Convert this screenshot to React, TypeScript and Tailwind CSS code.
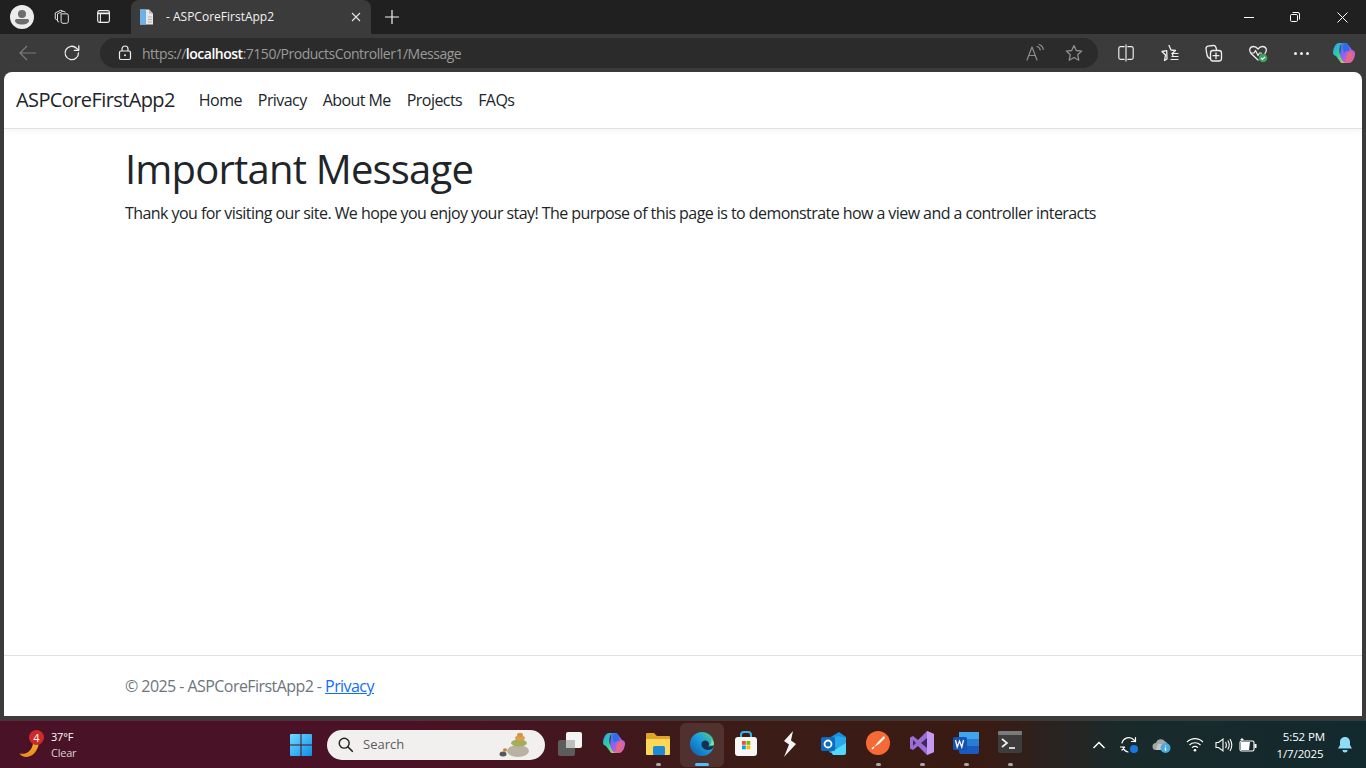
import React from 'react';

const stroke = { fill: 'none', stroke: 'currentColor', strokeWidth: 1.2, strokeLinecap: 'round', strokeLinejoin: 'round' } as const;

function Svg({ size = 20, className, children }: { size?: number; className?: string; children: React.ReactNode }) {
  return (
    <svg width={size} height={size} viewBox="0 0 20 20" className={className}>
      {children}
    </svg>
  );
}

function CopilotIcon({ size, id }: { size: number; id: string }) {
  return (
    <svg width={size} height={size} viewBox="0 0 24 24">
      <defs>
        <linearGradient id={id + 'a'} x1="0" y1="0" x2="1" y2="1">
          <stop offset="0" stopColor="#2f9bf0" />
          <stop offset="0.5" stopColor="#2dd4a0" />
          <stop offset="1" stopColor="#f7d23e" />
        </linearGradient>
        <linearGradient id={id + 'b'} x1="0" y1="0" x2="1" y2="1">
          <stop offset="0" stopColor="#2a7ff0" />
          <stop offset="0.5" stopColor="#a45df0" />
          <stop offset="1" stopColor="#f56a8c" />
        </linearGradient>
      </defs>
      <path d="M9 2h5c1 0 1.6.6 1.9 1.5L20 9c2 .5 3 1.500 3 3.500 0 3-1.500 7-3.500 8.500-.7.5-1.500 1-2.500 1h-5c-1 0-1.700-.6-2-1.600L8 15z" fill={`url(#${id}b)`} />
      <path d="M15 22h-5c-1 0-1.600-.6-1.900-1.500L4 15c-2-.5-3-1.500-3-3.500 0-3 1.500-7 3.500-8.500C5.200 2.500 6 2 7 2h3c-1.500 1-2 3-2.500 5.500C7 11 8 15 10 19c.8 1.800 2.500 3 5 3z" fill={`url(#${id}a)`} />
      <path d="M14 2c1 0 1.600.6 1.900 1.500L18 10c-2-.5-5 0-6 2l-1-4c-.5-2 .8-6 3-6z" fill="#1f6fe8" opacity="0.85" />
      <path d="M13 22c2.500 0 5-2 6-4.500.8-2 1.500-4 .8-7-1.500-.5-3.500 0-4.800 1.500l-1 6c-.2 1.500-.5 3-1 4z" fill="#f46a6a" opacity="0.8" />
    </svg>
  );
}

function TabStrip() {
  return (
    <div className="h-[34px] bg-[#202020] flex items-stretch text-white">
      <div className="w-[44px] flex items-center justify-center">
        <svg width="24" height="24" viewBox="0 0 24 24">
          <circle cx="12" cy="12" r="12" fill="#ececec" />
          <circle cx="12" cy="9" r="4" fill="#6d6d6d" />
          <path d="M5 15.500c0-1 1-1.500 2-1.500h10c1 0 2 .5 2 1.500 0 2.500-3 4-7 4s-7-1.500-7-4z" fill="#6d6d6d" />
        </svg>
      </div>
      <div className="w-[36px] flex items-center justify-center">
        <Svg size={18} className="text-[#e4e4e4]">
          <g {...stroke} strokeWidth={1.1}>
            <path d="M9 6.500h6.500a1.500 1.500 0 0 1 1.500 1.500v7a2 2 0 0 1-2 2h-4a2 2 0 0 1-2-2V8z" />
            <path d="M6.500 15.500l-1.500-.8V6.500L11 3.500l2.500 1" />
            <path d="M4 13L2.500 12V5.500L8.500 2.500l2 .8" />
          </g>
        </Svg>
      </div>
      <div className="w-[48px] flex items-center justify-center">
        <Svg size={18} className="text-[#f0f0f0]">
          <rect x="3" y="3" width="13" height="13" rx="2" {...stroke} strokeWidth={1.3} />
          <path d="M3.500 6h12" {...stroke} strokeWidth={2} />
          <path d="M6 6v9.500" {...stroke} strokeWidth={1.2} />
        </Svg>
      </div>
      <div className="ml-[3px] w-[240px] mt-0 bg-[#3b3b3b] rounded-t-lg flex items-center pl-[6px] pr-[8px]">
        <svg width="18" height="18" viewBox="0 0 18 18" className="ml-[1px]">
          <path d="M2 1.500h9l4 4v11H2z" fill="#e8e8e8" />
          <rect x="2" y="1.500" width="6" height="15" fill="#6fb1e6" />
          <path d="M11 1.500v4h4z" fill="#b9b9b9" />
          <path d="M10 9h4M10 11.500h4M10 14h4" stroke="#b0b0b0" strokeWidth="1" />
        </svg>
        <span className="ml-[10px] text-[12px] text-[#f2f2f2] flex-1">- ASPCoreFirstApp2</span>
        <svg width="10" height="10" viewBox="0 0 10 10" className="mr-[2px] text-[#e6e6e6]">
          <path d="M1 1l8 8M9 1l-8 8" stroke="currentColor" strokeWidth="1.1" />
        </svg>
      </div>
      <div className="w-[42px] flex items-center justify-center">
        <svg width="14" height="14" viewBox="0 0 14 14">
          <path d="M7 0v14M0 7h14" stroke="#f2f2f2" strokeWidth="1.2" />
        </svg>
      </div>
      <div className="flex-1" />
      <div className="flex items-stretch">
        <div className="w-[46px] flex items-center justify-center">
          <div className="w-[10px] h-px bg-white" />
        </div>
        <div className="w-[46px] flex items-center justify-center">
          <svg width="10" height="10" viewBox="0 0 10 10">
            <rect x="0.500" y="2.500" width="7" height="7" rx="1.200" fill="none" stroke="#fff" strokeWidth="1" />
            <path d="M2.500 .5h5.500a1.500 1.500 0 0 1 1.500 1.500v5.500" fill="none" stroke="#fff" strokeWidth="1" />
          </svg>
        </div>
        <div className="w-[48px] flex items-center justify-center">
          <svg width="11" height="11" viewBox="0 0 11 11">
            <path d="M.5 .5l10 10M10.500 .5l-10 10" stroke="#fff" strokeWidth="1" />
          </svg>
        </div>
      </div>
    </div>
  );
}

function Toolbar() {
  return (
    <div className="h-[38px] bg-[#3b3b3b] flex items-center text-[#efefef]">
      <div className="w-[56px] flex items-center justify-center">
        <svg width="18" height="16" viewBox="0 0 18 16">
          <path d="M1 8h16M8 1L1 8l7 7" fill="none" stroke="#7d7d7d" strokeWidth="1.200" />
        </svg>
      </div>
      <div className="w-[32px] flex items-center justify-center">
        <Svg size={20}>
          <path d="M16.500 10a6.700 6.700 0 1 1-2-4.800l2 1.900" {...stroke} strokeWidth={1.300} />
          <path d="M16.800 2.800v4.500h-4.500" {...stroke} strokeWidth={1.300} />
        </Svg>
      </div>
      <div className="ml-[12px] w-[998px] h-[30px] rounded-full bg-[#2b2b2b] flex items-center pl-[18px] pr-[14px]">
        <svg width="14" height="16" viewBox="0 0 14 16">
          <rect x="1.500" y="6" width="11" height="8.500" rx="1.500" fill="none" stroke="#efefef" strokeWidth="1.200" />
          <path d="M4 6V4a3 3 0 0 1 6 0v2" fill="none" stroke="#efefef" strokeWidth="1.200" />
          <circle cx="7" cy="10.200" r="1" fill="#efefef" />
        </svg>
        <span className="ml-[10px] text-[14px] text-[#9a9a9a] flex-1 font-['Open_Sans',sans-serif] tracking-[-0.035em]">
          https://<span className="text-white font-semibold">localhost</span>:7150/ProductsController1/Message
        </span>
        <div className="flex items-center gap-[19px] text-[#8e8e8e]">
          <Svg size={20}>
            <path d="M2 17L7 4l5 13M3.800 12.500h6.400" {...stroke} />
            <path d="M12 3.500c2 .5 3 2 3.200 3.500M14 1.500c2.500 .8 4 3 4.200 5" {...stroke} />
          </Svg>
          <Svg size={20}>
            <path d="M10 2.500l2.300 5 5.400.6-4 3.700 1.100 5.400L10 14.500l-4.800 2.700 1.100-5.400-4-3.700 5.400-.6z" {...stroke} strokeWidth={1.300} />
          </Svg>
        </div>
      </div>
      <div className="w-[55px] flex items-center justify-center">
        <Svg size={18}>
          <path d="M8 3H4a2 2 0 0 0-2 2v10a2 2 0 0 0 2 2h4M12 3h4a2 2 0 0 1 2 2v10a2 2 0 0 1-2 2h-4M10 1v18" {...stroke} strokeWidth={1.300} />
        </Svg>
      </div>
      <div className="w-[34px] flex items-center justify-center">
        <Svg size={20}>
          <path d="M9 2.500l2 4.500 4.500.5-3.300 3 .7 2M7 16l-2.500 1.500 1-5.500-3.500-3.500 4.700-.8z" {...stroke} strokeWidth={1.300} />
          <path d="M12 10.500h6M12 13.500h6M11 16.500h7" {...stroke} />
        </Svg>
      </div>
      <div className="w-[54px] flex items-center justify-center">
        <Svg size={20}>
          <path d="M6.500 15.500c-2-.3-3-1.500-3.500-3.500L2 6c-.2-1.500.5-2.500 2-2.800l5-.7c1.500-.2 2.500.5 3 2l.5 2" {...stroke} strokeWidth={1.300} />
          <rect x="6.500" y="7.500" width="11" height="10.500" rx="2.500" {...stroke} strokeWidth={1.300} />
          <path d="M12 10v5.500M9.200 12.700h5.600" {...stroke} strokeWidth={1.300} />
        </Svg>
      </div>
      <div className="w-[34px] flex items-center justify-center">
        <svg width="20" height="20" viewBox="0 0 20 20">
          <path d="M10 17L3 10.500C.5 8 1.500 3.500 5.500 3.500c2 0 3.500 1.200 4.500 2.500 1-1.300 2.500-2.500 4.500-2.500 4 0 5 4.500 2.500 7" {...stroke} strokeWidth={1.300} />
          <path d="M3 10h3l1.500-2.500 2.500 5 1.500-2.500h2" {...stroke} />
          <circle cx="15" cy="15" r="4.300" fill="#3ba55c" />
          <path d="M13 15l1.500 1.500L17 13.800" fill="none" stroke="#fff" strokeWidth="1.200" />
        </svg>
      </div>
      <div className="w-[52px] flex items-center justify-center gap-[3px]">
        <div className="w-[3px] h-[3px] rounded-full bg-[#efefef]" />
        <div className="w-[3px] h-[3px] rounded-full bg-[#efefef]" />
        <div className="w-[3px] h-[3px] rounded-full bg-[#efefef]" />
      </div>
      <div className="w-[34px] flex items-center justify-center">
        <CopilotIcon size={24} id="cp1" />
      </div>
    </div>
  );
}

function Page() {
  return (
    <div className="flex-1 mx-[4px] bg-white rounded-t-lg flex flex-col text-[#212529] font-['Open_Sans',sans-serif]">
      <nav className="h-[57px] border-b border-[#dee2e6] shadow-[0_2px_6px_rgba(0,0,0,0.05)] flex items-center pl-[12px]">
        <span className="text-[20px] tracking-[-0.03em] text-[#212529]">ASPCoreFirstApp2</span>
        <div className="ml-[16px] flex items-center text-[16px] tracking-[-0.035em]">
          <span className="px-[8px]">Home</span>
          <span className="px-[8px]">Privacy</span>
          <span className="px-[8px]">About Me</span>
          <span className="px-[8px]">Projects</span>
          <span className="px-[8px]">FAQs</span>
        </div>
      </nav>
      <main className="flex-1 w-[1140px] mx-auto px-3 pt-[16px]">
        <h1 className="text-[40px] leading-[48px] font-medium tracking-[-0.02em] mb-[8px]">Important Message</h1>
        <p className="text-[16px] leading-[24px] tracking-[-0.035em]">
          Thank you for visiting our site. We hope you enjoy your stay! The purpose of this page is to demonstrate how a view and a controller interacts
        </p>
      </main>
      <footer className="h-[61px] border-t border-[#dee2e6]">
        <div className="w-[1140px] mx-auto px-3 pt-[18px] text-[16px] leading-[24px] text-[#6c757d] tracking-[-0.035em]">
          © 2025 - ASPCoreFirstApp2 - <span className="text-[#0d6efd] underline">Privacy</span>
        </div>
      </footer>
    </div>
  );
}

function Slot({ children, mark, active }: { children: React.ReactNode; mark?: boolean; active?: boolean }) {
  return (
    <div className={`w-[44px] h-[44px] flex flex-col items-center justify-between pt-[8px] pb-[1px] rounded-md ${active ? 'bg-white/10' : ''}`}>
      {children}
      <div className={active ? 'w-[14px] h-[3px] rounded-full bg-[#4cc2ff]' : mark ? 'w-[5px] h-[3px] rounded-full bg-[#a8a8a8]' : 'h-[3px]'} />
    </div>
  );
}

function Taskbar() {
  return (
    <div className="h-[48px] mt-[4px] bg-[linear-gradient(90deg,#4a1226_0%,#4a1226_30%,#3b1c16_55%,#3a1b14_72%,#1a2a2b_82%,#12292d_100%)] border-t border-white/10 flex items-center text-white font-['Open_Sans',sans-serif]">
      <div className="w-[279px] flex items-center pl-[19px]">
        <div className="w-[32px] h-[40px] relative flex items-center">
          <svg width="22" height="22" viewBox="0 0 22 22" className="mt-[6px]">
            <defs>
              <linearGradient id="moon" x1="0" y1="0" x2="0" y2="1">
                <stop offset="0" stopColor="#f5b52e" />
                <stop offset="1" stopColor="#ef8a1d" />
              </linearGradient>
            </defs>
            <path d="M20 1c1 9-4 18-12 19-3 .3-6-1-7.500-3.500C6 18 13 15 14 6c2-.5 4-2.500 6-5z" fill="url(#moon)" />
          </svg>
          <span className="absolute left-[10px] top-[5px] w-[15px] h-[15px] rounded-full bg-[#cf2a27] text-[11px] leading-[15px] text-center">4</span>
        </div>
        <div className="text-[11px] leading-[16px] tracking-[-0.02em]">
          <div>37°F</div>
          <div className="text-[#d9d0d2]">Clear</div>
        </div>
      </div>
      <div className="w-[44px] flex items-center justify-center">
        <svg width="22" height="22" viewBox="0 0 22 22">
          <defs>
            <linearGradient id="win" x1="0" y1="0" x2="1" y2="1">
              <stop offset="0" stopColor="#6fdcff" />
              <stop offset="1" stopColor="#0f8ee8" />
            </linearGradient>
          </defs>
          <path d="M0 1a1 1 0 0 1 1-1h9.500v10.500H0zM11.500 0H21a1 1 0 0 1 1 1v9.500H11.500zM0 11.500h10.500V22H1a1 1 0 0 1-1-1zM11.500 11.500H22V21a1 1 0 0 1-1 1h-9.500z" fill="url(#win)" />
        </svg>
      </div>
      <div className="ml-[4px] w-[218px] h-[30px] rounded-full bg-[#f2f0ef] flex items-center pl-[10px] pr-[12px] text-[#5c5c5c]">
        <Svg size={18} className="text-[#222]">
          <circle cx="8" cy="8" r="5.500" fill="none" stroke="currentColor" strokeWidth="1.600" />
          <path d="M12 12l5 5" stroke="currentColor" strokeWidth="1.800" strokeLinecap="round" />
        </Svg>
        <span className="ml-[8px] text-[13px] flex-1">Search</span>
        <svg width="34" height="26" viewBox="0 0 34 26">
          <ellipse cx="19" cy="19" rx="11" ry="6" fill="#b9b2a3" />
          <ellipse cx="20" cy="11" rx="8" ry="3.500" fill="#a6ad5a" />
          <ellipse cx="21" cy="6" rx="5" ry="2.500" fill="#d8a152" />
          <ellipse cx="21" cy="3" rx="3" ry="2.200" fill="#e09044" />
          <ellipse cx="4" cy="22" rx="3.500" ry="2.500" fill="#55565a" />
          <ellipse cx="6" cy="18" rx="2" ry="1.800" fill="#c58438" />
        </svg>
      </div>
      <div className="ml-[3px] flex items-center">
        <Slot>
          <svg width="26" height="26" viewBox="0 0 26 26">
            <rect x="1" y="9" width="17" height="16" rx="2" fill="#5c5c5c" />
            <rect x="9" y="1" width="16" height="16" rx="2" fill="#f4f4f4" />
            <rect x="9" y="9" width="9" height="8" fill="#bdbdbd" />
          </svg>
        </Slot>
        <Slot>
          <CopilotIcon size={24} id="cp2" />
        </Slot>
        <Slot mark>
          <svg width="26" height="26" viewBox="0 0 26 26">
            <path d="M1 3a1 1 0 0 1 1-1h7l3 3h12a1 1 0 0 1 1 1v3H1z" fill="#e0a526" />
            <path d="M1 8h24v15a1 1 0 0 1-1 1H2a1 1 0 0 1-1-1z" fill="#fcd758" />
            <rect x="8" y="15" width="12" height="9" rx="1.500" fill="#1b8bd6" />
          </svg>
        </Slot>
        <Slot active>
          <svg width="26" height="26" viewBox="0 0 26 26">
            <defs>
              <linearGradient id="edge" x1="0" y1="1" x2="1" y2="0">
                <stop offset="0" stopColor="#0c59a4" />
                <stop offset="0.550" stopColor="#1b9de2" />
                <stop offset="1" stopColor="#58d37b" />
              </linearGradient>
            </defs>
            <circle cx="13" cy="13" r="12" fill="url(#edge)" />
            <path d="M25 14c0 3-3 5-6 5-4 0-7-3-6.500-6.500.3-2 2-3 3.500-3 3 0 4 2 4 4 0 1-.5 1.500-1 2 3 0 6-1 6-1.500z" fill="#16324d" />
            <path d="M25 13.500c0-2-1-4-3-5.500 1 2 .5 5-1.500 6 2 .5 4 .5 4.500-.5z" fill="#8de08a" />
          </svg>
        </Slot>
        <Slot>
          <svg width="24" height="26" viewBox="0 0 24 26">
            <path d="M7 7V4a3 3 0 0 1 3-3h4a3 3 0 0 1 3 3v3" fill="none" stroke="#35b4e8" strokeWidth="2" />
            <rect x="1" y="6" width="22" height="19" rx="3" fill="#f7f7f7" />
            <rect x="8" y="10" width="3.800" height="3.800" fill="#f25022" />
            <rect x="12.500" y="10" width="3.800" height="3.800" fill="#7fba00" />
            <rect x="8" y="14.500" width="3.800" height="3.800" fill="#00a4ef" />
            <rect x="12.500" y="14.500" width="3.800" height="3.800" fill="#ffb900" />
          </svg>
        </Slot>
        <Slot>
          <svg width="18" height="26" viewBox="0 0 18 26">
            <path d="M12 0L3 10l5 3.500L3 26l12-13-5-3.500z" fill="#f4f4f4" />
          </svg>
        </Slot>
        <Slot>
          <svg width="26" height="26" viewBox="0 0 26 26">
            <path d="M8 7l10-6 7 5v14a2 2 0 0 1-2 2H10a2 2 0 0 1-2-2z" fill="#1490df" />
            <path d="M8 8l9-3 8 2v7l-8 3-9-4z" fill="#28a8ea" />
            <path d="M10 21l15-9v10a2 2 0 0 1-2 2H12z" fill="#50d9ff" />
            <rect x="0" y="6" width="14" height="14" rx="1.500" fill="#0f6cbd" />
            <circle cx="7" cy="13" r="3.500" fill="none" stroke="#fff" strokeWidth="1.800" />
          </svg>
        </Slot>
        <Slot mark>
          <svg width="24" height="24" viewBox="0 0 24 24">
            <circle cx="12" cy="12" r="12" fill="#f56a35" />
            <path d="M18 5l-6 6-4 5 5-3 6-6z" fill="#fff" />
            <path d="M8 16l-2 2" stroke="#fff" strokeWidth="1.500" />
          </svg>
        </Slot>
        <Slot mark>
          <svg width="24" height="24" viewBox="0 0 24 24">
            <path d="M17 0l7 3v18l-7 3-9-9-5 4-3-1.500v-11L3 5l5 4z" fill="#9a6ed6" />
            <path d="M17 0l7 3v18l-7 3z" fill="#c49bf0" />
            <path d="M17 7l-6 5 6 5z" fill="#3e2a5f" />
            <path d="M3 9v6l3-3z" fill="#3e2a5f" />
          </svg>
        </Slot>
        <Slot mark>
          <svg width="26" height="24" viewBox="0 0 26 24">
            <rect x="6" y="1" width="20" height="22" rx="2" fill="#185abd" />
            <rect x="6" y="1" width="20" height="7" fill="#41a5ee" />
            <rect x="6" y="8" width="20" height="7" fill="#2b7cd3" />
            <rect x="0" y="6" width="14" height="13" rx="1.500" fill="#1553b0" />
            <path d="M2.500 9l1.700 7 2.300-6 2.300 6 1.700-7" fill="none" stroke="#fff" strokeWidth="1.300" />
          </svg>
        </Slot>
        <Slot mark>
          <svg width="24" height="22" viewBox="0 0 24 22">
            <rect width="24" height="22" rx="2" fill="#3d3d3d" />
            <rect width="24" height="4" rx="1" fill="#7a7a7a" />
            <path d="M4 8l5 4-5 4" fill="none" stroke="#f0f0f0" strokeWidth="1.700" />
            <path d="M11 17h6" stroke="#f0f0f0" strokeWidth="1.700" />
          </svg>
        </Slot>
      </div>
      <div className="flex-1" />
      <div className="flex items-center text-white">
        <div className="w-[30px] flex justify-center">
          <svg width="14" height="8" viewBox="0 0 14 8">
            <path d="M1.500 7L7 1.500 12.500 7" fill="none" stroke="#fff" strokeWidth="1.500" />
          </svg>
        </div>
        <div className="w-[32px] flex justify-center">
          <svg width="20" height="20" viewBox="0 0 20 20">
            <path d="M2 8a7 7 0 0 1 12-3l1.500 1.500M15.500 2.500v4h-4" {...stroke} />
            <path d="M2 15l2.500-3h-4M3 12.500A7 7 0 0 0 8 17" {...stroke} />
            <circle cx="14" cy="14" r="4" fill="#1878e0" />
          </svg>
        </div>
        <div className="w-[31px] flex justify-center">
          <svg width="20" height="18" viewBox="0 0 20 18">
            <path d="M4 14a3.500 3.500 0 0 1 0-7 5 5 0 0 1 9-1.500 4 4 0 0 1 2 1.500" fill="#a5a8a9" />
            <path d="M4 14h8V8H6z" fill="#c5c8c8" />
            <circle cx="13.500" cy="12" r="5" fill="#48a9dc" />
            <path d="M13.500 9.500v.7M13.500 11.500V15" stroke="#fff" strokeWidth="1.300" />
          </svg>
        </div>
        <div className="w-[36px] flex justify-center">
          <svg width="18" height="15" viewBox="0 0 18 15">
            <path d="M1 5c4.500-4.500 11.500-4.500 16 0M3.500 8c3-3 8-3 11 0M6 10.700c1.800-1.600 4.200-1.600 6 0" fill="none" stroke="#fff" strokeWidth="1.100" />
            <circle cx="9" cy="13.300" r="1.300" fill="#fff" />
          </svg>
        </div>
        <div className="w-[22px] flex justify-center">
          <svg width="18" height="16" viewBox="0 0 18 16">
            <path d="M1 5.500h2.500L8 2v12l-4.500-3.500H1z" fill="none" stroke="#fff" strokeWidth="1.100" />
            <path d="M10.500 5c1 1.800 1 4.200 0 6M12.800 3.500c1.700 2.700 1.700 6.300 0 9M15 2c2.200 3.700 2.200 8.300 0 12" fill="none" stroke="#fff" strokeWidth="1.100" />
          </svg>
        </div>
        <div className="w-[26px] flex justify-center">
          <svg width="18" height="14" viewBox="0 0 18 14">
            <rect x="1" y="3" width="14" height="10" rx="1.500" fill="none" stroke="#fff" strokeWidth="1.100" />
            <path d="M2 4h9l-1 8H2z" fill="#fff" />
            <rect x="15.500" y="6" width="2" height="4" fill="#fff" />
            <path d="M3 0v3M1.500 1.500h3" stroke="#fff" strokeWidth="1" />
          </svg>
        </div>
        <div className="w-[72px] ml-[3px] text-center text-[11.500px] leading-[17px] tracking-[-0.01em]">
          <div className="text-right pr-[11px]">5:52 PM</div>
          <div>1/7/2025</div>
        </div>
        <div className="w-[30px] flex justify-start pl-[1px]">
          <svg width="16" height="17" viewBox="0 0 16 17">
            <path d="M8 1c3 0 5 2.200 5 5v3l2 3.500H1L3 9V6c0-2.800 2-5 5-5z" fill="#8edcf5" />
            <path d="M5.500 14a2.500 2.500 0 0 0 5 0z" fill="#8edcf5" />
          </svg>
        </div>
      </div>
    </div>
  );
}

export default function App() {
  return (
    <div className="w-[1366px] h-[768px] overflow-hidden bg-[#3b3b3b] flex flex-col font-['Open_Sans',sans-serif]">
      <TabStrip />
      <Toolbar />
      <Page />
      <Taskbar />
    </div>
  );
}
